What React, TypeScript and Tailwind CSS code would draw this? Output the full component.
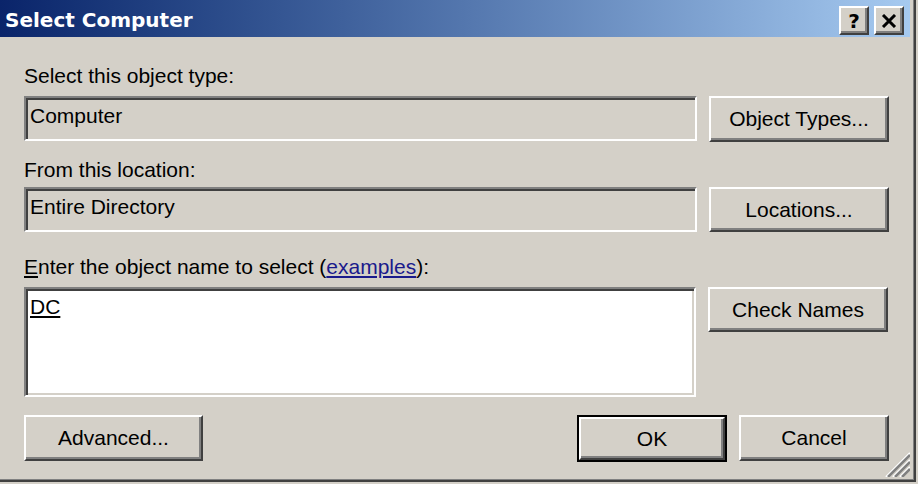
import React from 'react';

const FONT = '"Liberation Sans", Arial, sans-serif';

const sunken =
  'border-2 border-t-[#808080] border-l-[#808080] border-b-white border-r-white shadow-[inset_2px_2px_0_#404040,inset_-2px_-2px_0_#d4d0c8]';

const raised =
  'border-2 border-t-white border-l-white border-b-[#404040] border-r-[#404040] shadow-[inset_-2px_-2px_0_#808080] bg-[#d4d0c8]';

function Button({ children, className = '' }: { children: React.ReactNode; className?: string }) {
  return (
    <button
      type="button"
      className={`flex items-center justify-center text-[21px] leading-6 text-black ${raised} ${className}`}
    >
      {children}
    </button>
  );
}

function TitleButton({ children }: { children: React.ReactNode }) {
  return (
    <div className={`flex h-[29px] w-[30px] items-center justify-center ${raised}`}>
      {children}
    </div>
  );
}

function Grip() {
  return (
    <svg width="26" height="26" viewBox="0 0 26 26" className="absolute bottom-[3px] right-[4px]">
      {[0, 7, 14].map((o) => (
        <g key={o}>
          <line x1={o + 2} y1="26" x2="26" y2={o + 2} stroke="#ffffff" strokeWidth="2" />
          <line x1={o + 4} y1="26" x2="26" y2={o + 4} stroke="#808080" strokeWidth="2.5" />
        </g>
      ))}
    </svg>
  );
}

export default function App() {
  return (
    <div className="h-[484px] w-[918px] overflow-hidden bg-[#d4d0c8]" style={{ fontFamily: FONT }}>
      <div className="relative h-[482px] w-[916px] border-b-2 border-r-2 border-[#404040] shadow-[inset_-1px_-1px_0_#808080]">
        {/* Barre de titre */}
        <div className="flex h-[37px] w-[910px] items-start justify-between bg-gradient-to-r from-[#0a246a] to-[#a6caf0] pl-[5px] pr-[6px]">
          <span
            className="pt-[8px] text-[20px] font-bold leading-6 text-white"
            style={{ fontFamily: '"DejaVu Sans", Verdana, sans-serif' }}
          >
            Select Computer
          </span>
          <div className="flex gap-[5px] pt-[6px]">
            <TitleButton>
              <span
                className="text-[20px] font-bold leading-none text-black"
                style={{ fontFamily: '"DejaVu Sans", sans-serif' }}
              >
                ?
              </span>
            </TitleButton>
            <TitleButton>
              <svg width="16" height="14" viewBox="0 0 16 14">
                <path d="M2 1 L14 13 M14 1 L2 13" stroke="#000" strokeWidth="3" />
              </svg>
            </TitleButton>
          </div>
        </div>

        {/* Contenu */}
        <div className="w-[889px] pl-[24px] text-[21px] leading-6 text-black">
          <p className="mt-[27px]">Select this object type:</p>
          <div className="mt-[8px] flex gap-[12px]">
            <div className={`h-[45px] w-[673px] pl-[4px] pt-[6px] ${sunken}`}>Computer</div>
            <Button className="h-[46px] w-[180px]">Object Types...</Button>
          </div>

          <p className="mt-[16px]">From this location:</p>
          <div className="mt-[5px] flex gap-[12px]">
            <div className={`h-[45px] w-[673px] pl-[4px] pt-[6px] ${sunken}`}>Entire Directory</div>
            <Button className="h-[45px] w-[180px]">Locations...</Button>
          </div>

          <p className="mt-[23px]">
            <span className="underline">E</span>nter the object name to select (
            <span className="text-[#1a1a8c] underline">examples</span>):
          </p>
          <div className="mt-[8px] flex items-start gap-[12px]">
            <div className={`h-[110px] w-[672px] bg-white pl-[4px] pt-[6px] ${sunken}`}>
              <span className="underline">DC</span>
            </div>
            <Button className="h-[45px] w-[180px]">Check Names</Button>
          </div>

          <div className="mt-[18px] flex justify-between">
            <Button className="h-[46px] w-[179px]">Advanced...</Button>
            <div className="flex gap-[12px]">
              <div className="h-[47px] w-[150px] border-2 border-black">
                <Button className="h-full w-full">OK</Button>
              </div>
              <Button className="h-[46px] w-[150px]">Cancel</Button>
            </div>
          </div>
        </div>

        <Grip />
      </div>
    </div>
  );
}
